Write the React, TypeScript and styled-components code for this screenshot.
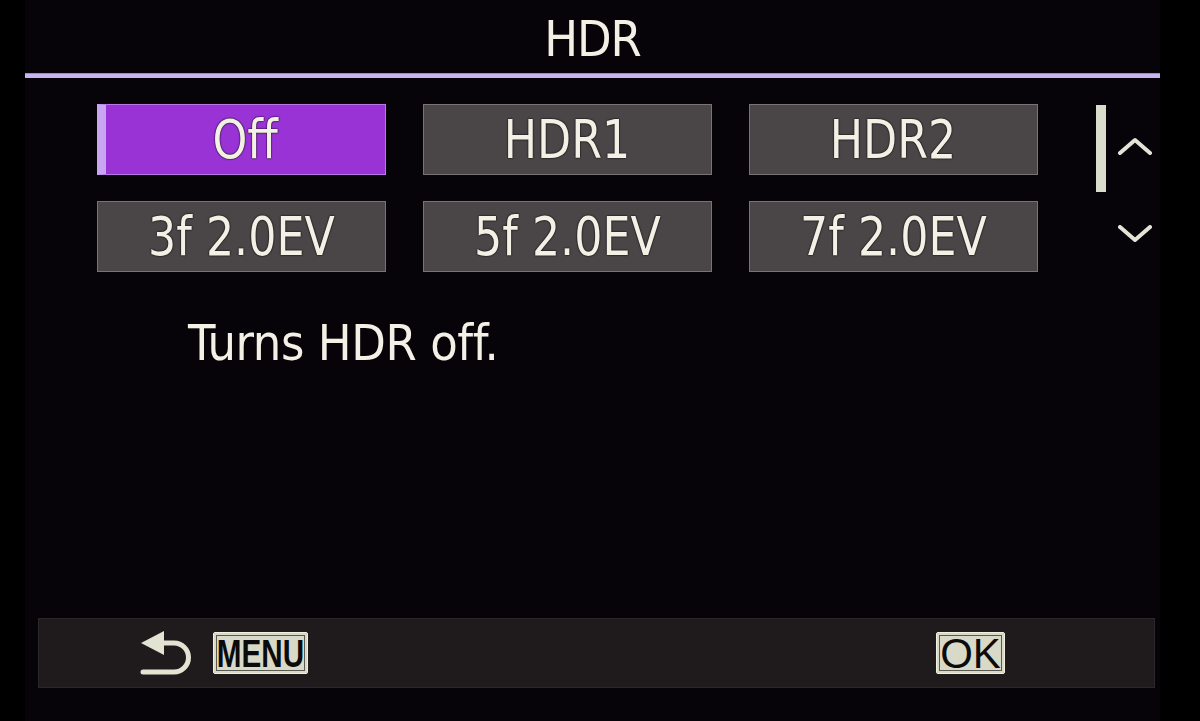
import styled, { createGlobalStyle } from "styled-components";

const GlobalStyle = createGlobalStyle`
  html, body {
    margin: 0;
    padding: 0;
    background: #000;
  }
  body {
    font-family: "DejaVu Sans Condensed", "Liberation Sans Narrow", "Open Sans", sans-serif;
    font-stretch: condensed;
  }
`;

const Screen = styled.div`
  width: 1135px;
  height: 721px;
  margin-left: 25px;
  background: #060409;
  display: flex;
  flex-direction: column;
  color: #f3f0e6;
`;

const Title = styled.div`
  height: 73px;
  display: flex;
  align-items: center;
  justify-content: center;
  font-size: 50px;
  padding-top: 4px;
  box-sizing: border-box;
  letter-spacing: -1px;
`;

const Rule = styled.div`
  height: 4px;
  background: #c9b4f2;
  border-top: 1px solid #d86ad0;
`;

const Body = styled.div`
  flex: 1;
  display: flex;
  flex-direction: column;
`;

const Options = styled.div`
  display: flex;
  padding: 26px 0 0 72px;
`;

const Grid = styled.div`
  display: grid;
  grid-template-columns: repeat(3, 289px);
  column-gap: 37px;
  row-gap: 26px;
`;

const Option = styled.div<{ selected?: boolean }>`
  height: 71px;
  box-sizing: border-box;
  display: flex;
  align-items: center;
  justify-content: center;
  font-size: 53px;
  text-shadow: 0 0 2px #000, 0 0 1px #000;
  background: ${(p) => (p.selected ? "#9a33d6" : "#4a4546")};
  border: 1px solid ${(p) => (p.selected ? "#b777e8" : "#7a7274")};
  border-left: ${(p) => (p.selected ? "9px solid #c8a6f2" : "1px solid #7a7274")};

  span {
    display: inline-block;
    white-space: pre;
    transform: scaleX(0.93);
  }
`;

const Scroller = styled.div`
  display: flex;
  margin-left: 58px;
  padding-top: 1px;
  gap: 12px;
`;

const ScrollTrack = styled.div`
  width: 10px;
  height: 87px;
  background: #d9ddcc;
`;

const Arrows = styled.div`
  display: flex;
  flex-direction: column;
  padding-top: 32px;
  gap: 70px;
`;

const Hint = styled.div`
  margin: 41px 0 0 163px;
  font-size: 50px;
  letter-spacing: -0.4px;
  height: 60px;
  display: flex;
  align-items: center;
`;

const Footer = styled.div`
  margin: auto 0 33px 13px;
  width: 1117px;
  height: 70px;
  box-sizing: border-box;
  background: #1f1b1c;
  border: 1px solid #2b2829;
  display: flex;
  align-items: center;
  padding-left: 101px;
`;

const Key = styled.div<{ bold?: boolean }>`
  height: 42px;
  box-sizing: border-box;
  display: flex;
  align-items: center;
  justify-content: center;
  background: #d9d9c8;
  border: 1px solid #f0f0e0;
  box-shadow: inset 0 0 0 2px #d9d9c8, inset 0 0 0 3px #5a5a50;
  border-radius: 2px;
  color: #0b0b0b;
  font-family: "Liberation Sans", sans-serif;
  font-stretch: normal;
  font-weight: ${(p) => (p.bold ? 700 : 400)};
`;

const MenuKey = styled(Key)`
  width: 95px;
  margin-left: 19px;
  font-size: 39px;
  span {
    display: inline-block;
    transform: scaleX(0.76);
    padding-top: 2px;
  }
`;

const OkKey = styled(Key)`
  width: 69px;
  margin-left: 628px;
  font-size: 42px;
  padding-top: 2px;
`;

function Chevron({ up }: { up?: boolean }) {
  return (
    <svg width="34" height="18" viewBox="0 0 34 18">
      <polyline
        points={up ? "2,16 17,3 32,16" : "2,2 17,15 32,2"}
        fill="none"
        stroke="#e2e5d6"
        strokeWidth="4"
        strokeLinejoin="round"
        strokeLinecap="round"
      />
    </svg>
  );
}

function BackIcon() {
  return (
    <svg width="54" height="47" viewBox="0 0 54 47">
      <polygon points="1,13 24,1 24,25" fill="#e2e3d3" />
      <path
        d="M22 13 H34 A14.5 14.5 0 0 1 34 42 H3"
        fill="none"
        stroke="#e2e3d3"
        strokeWidth="5"
        strokeLinecap="round"
      />
    </svg>
  );
}

const options = ["Off", "HDR1", "HDR2", "3f 2.0EV", "5f 2.0EV", "7f 2.0EV"];

export default function App() {
  return (
    <>
      <GlobalStyle />
      <Screen>
        <Title>HDR</Title>
        <Rule />
        <Body>
          <Options>
            <Grid>
              {options.map((o, i) => (
                <Option key={o} selected={i === 0}>
                  <span>{o}</span>
                </Option>
              ))}
            </Grid>
            <Scroller>
              <ScrollTrack />
              <Arrows>
                <Chevron up />
                <Chevron />
              </Arrows>
            </Scroller>
          </Options>
          <Hint>Turns HDR off.</Hint>
          <Footer>
            <BackIcon />
            <MenuKey bold>
              <span>MENU</span>
            </MenuKey>
            <OkKey>OK</OkKey>
          </Footer>
        </Body>
      </Screen>
    </>
  );
}
